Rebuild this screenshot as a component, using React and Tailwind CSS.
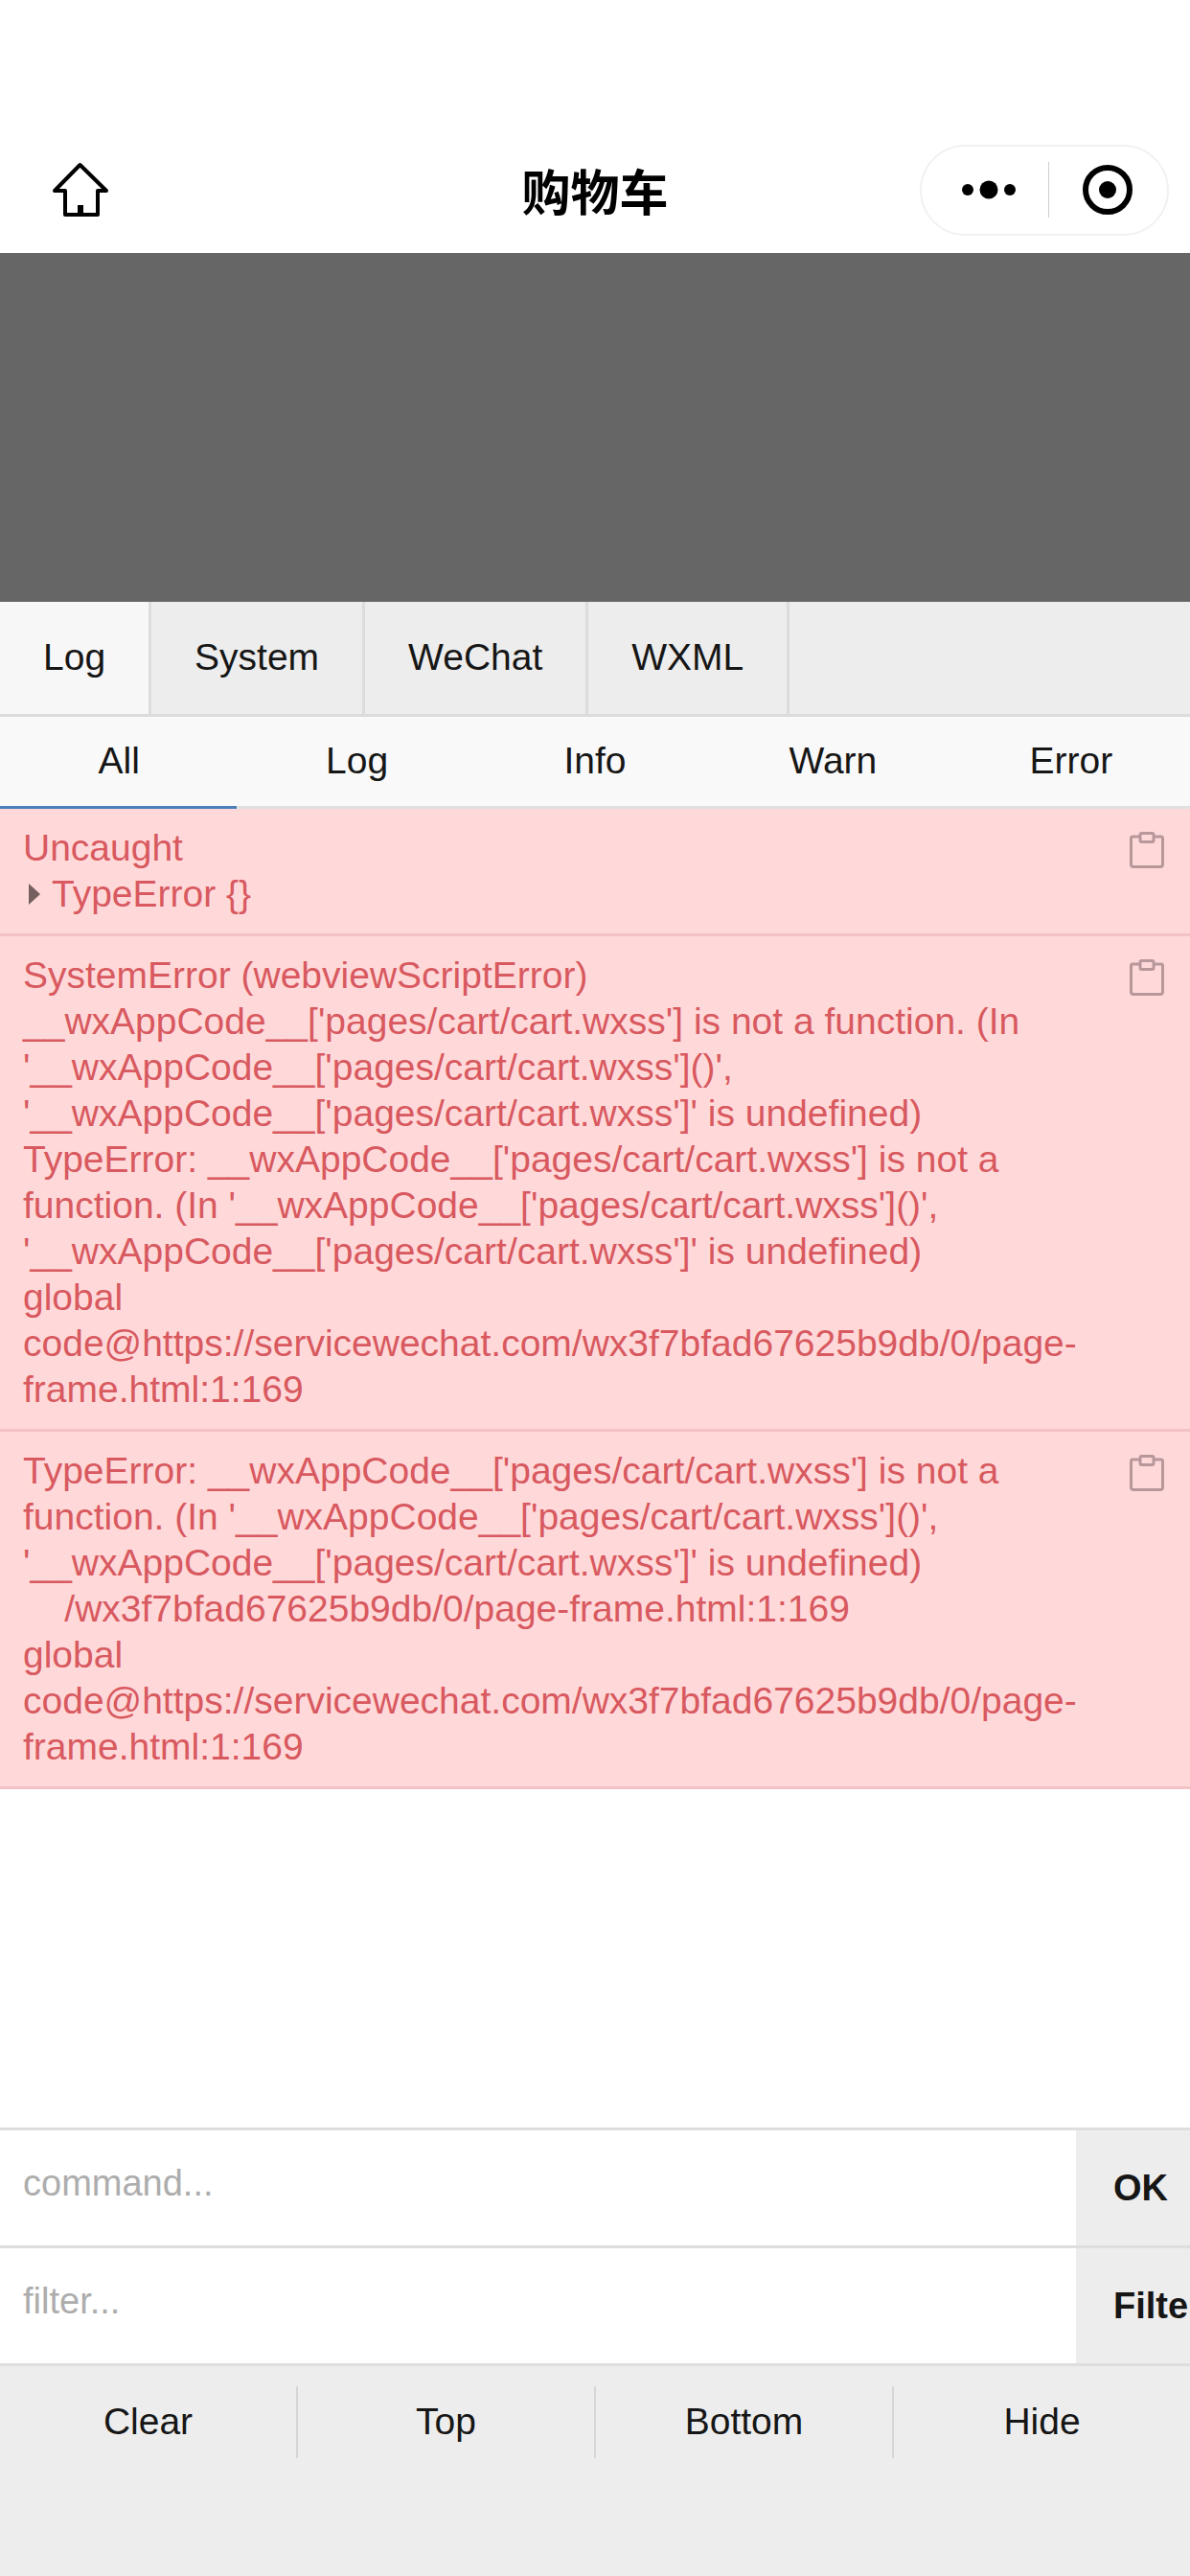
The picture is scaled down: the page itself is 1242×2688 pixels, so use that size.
const topTabs = [
  { label: 'Log', active: true },
  { label: 'System' },
  { label: 'WeChat' },
  { label: 'WXML' },
];

const subTabs = ['All', 'Log', 'Info', 'Warn', 'Error'];

const logs = [
  {
    id: 'uncaught',
    lines: ['Uncaught'],
    expandable: 'TypeError {}',
  },
  {
    id: 'system',
    lines: [
      'SystemError (webviewScriptError)',
      "__wxAppCode__['pages/cart/cart.wxss'] is not a function. (In",
      "'__wxAppCode__['pages/cart/cart.wxss']()',",
      "'__wxAppCode__['pages/cart/cart.wxss']' is undefined)",
      "TypeError: __wxAppCode__['pages/cart/cart.wxss'] is not a",
      "function. (In '__wxAppCode__['pages/cart/cart.wxss']()',",
      "'__wxAppCode__['pages/cart/cart.wxss']' is undefined)",
      'global',
      'code@https://servicewechat.com/wx3f7bfad67625b9db/0/page-',
      'frame.html:1:169',
    ],
  },
  {
    id: 'type',
    lines: [
      "TypeError: __wxAppCode__['pages/cart/cart.wxss'] is not a",
      "function. (In '__wxAppCode__['pages/cart/cart.wxss']()',",
      "'__wxAppCode__['pages/cart/cart.wxss']' is undefined)",
      '    /wx3f7bfad67625b9db/0/page-frame.html:1:169',
      'global',
      'code@https://servicewechat.com/wx3f7bfad67625b9db/0/page-',
      'frame.html:1:169',
    ],
  },
];

function HomeIcon() {
  return (
    <svg width="68" height="66" viewBox="0 0 68 66" fill="none" stroke="#000" strokeWidth="4" strokeLinejoin="round">
      <path d="M33.5 7 L7 34 H18 V59 H52 V34 H61 Z" />
      <rect x="31" y="49" width="6" height="10" fill="#000" stroke="none" />
    </svg>
  );
}

function Capsule() {
  return (
    <div className="flex h-[95px] w-[260px] items-center rounded-full border-2 border-[#f1f1f1]">
      <div className="flex flex-1 justify-center pl-[8px]">
        <svg width="70" height="20" viewBox="0 0 70 20" fill="#000">
          <circle cx="13" cy="10" r="6" />
          <circle cx="35" cy="10" r="9.5" />
          <circle cx="57" cy="10" r="6" />
        </svg>
      </div>
      <div className="h-[58px] w-[1px] bg-[#cfcfcf]" />
      <div className="flex flex-1 justify-center">
        <svg width="54" height="54" viewBox="0 0 54 54">
          <circle cx="27" cy="27" r="23" fill="none" stroke="#000" strokeWidth="6" />
          <circle cx="27" cy="27" r="9" fill="#000" />
        </svg>
      </div>
    </div>
  );
}

function CopyIcon() {
  return (
    <svg width="36" height="38" viewBox="0 0 36 38" fill="none" stroke="#b8979b" strokeWidth="3" strokeLinejoin="round" className="absolute right-[27px] top-[24px]">
      <path d="M11 5 H3 Q1.5 5 1.5 7 V34 Q1.5 36.5 4 36.5 H32 Q34.5 36.5 34.5 34 V7 Q34.5 5 33 5 H25" />
      <rect x="11" y="1.5" width="14" height="9" rx="1.5" />
    </svg>
  );
}

function LogEntry({ log }) {
  return (
    <div className="relative border-b-[3px] border-[#f3c2c6] bg-[#ffd9da] px-[24px] py-[17px] text-[39px] leading-[48px] text-[#d8595f]">
      {log.lines.map((line, i) => (
        <div key={i} className="whitespace-pre">{line}</div>
      ))}
      {log.expandable && (
        <div className="flex items-center">
          <svg width="30" height="24" viewBox="0 0 30 24" className="shrink-0">
            <path d="M6 1 L18 12 L6 23 Z" fill="#75605f" />
          </svg>
          <span>{log.expandable}</span>
        </div>
      )}
      <CopyIcon />
    </div>
  );
}

function InputRow({ placeholder, button }) {
  return (
    <div className="flex h-[123px] border-b-[3px] border-[#dedede]">
      <div className="flex flex-1 items-center bg-white px-[24px] pb-[10px] text-[38px] text-[#adadad]">{placeholder}</div>
      <div className="flex w-[119px] items-center overflow-hidden whitespace-nowrap bg-[#ededed] pl-[39px] text-[38px] font-bold text-[#161616]">{button}</div>
    </div>
  );
}

export default function App() {
  return (
    <div className="flex h-[2688px] flex-col overflow-hidden bg-white font-['Liberation_Sans','Noto_Sans_CJK_SC',sans-serif] text-[#161616]">
      <header className="grid h-[264px] grid-cols-[1fr_auto_1fr] items-center pb-[18px] pt-[150px]">
        <div className="pl-[50px]">
          <HomeIcon />
        </div>
        <h1 className="font-['Noto_Sans_CJK_SC',sans-serif] text-[51px] font-bold leading-none text-black">购物车</h1>
        <div className="flex justify-end pr-[22px]">
          <Capsule />
        </div>
      </header>

      <div className="h-[364px] bg-[#666666]" />

      <nav className="flex h-[120px] border-b-[3px] border-[#dcdcdc] bg-[#ededed] text-[39px]">
        {topTabs.map((tab) => (
          <div
            key={tab.label}
            className={
              tab.active
                ? 'flex items-center border-r-[3px] border-[#dcdcdc] bg-[#f7f7f7] px-[45px]'
                : 'flex items-center border-r-[3px] border-[#dcdcdc] px-[45px]'
            }
          >
            {tab.label}
          </div>
        ))}
      </nav>

      <div className="flex h-[93px] bg-[#f9f9f9] text-[39px]">
        {subTabs.map((tab) => (
          <div key={tab} className="flex flex-1 items-center justify-center">{tab}</div>
        ))}
      </div>
      <div className="flex h-[3px] bg-[#e0e0e0]">
        <div className="w-[247px] bg-[#4a7fb8]" />
      </div>

      <main className="flex-1">
        {logs.map((log) => (
          <LogEntry key={log.id} log={log} />
        ))}
      </main>

      <div className="border-t-[3px] border-[#dedede]">
        <InputRow placeholder="command..." button="OK" />
        <InputRow placeholder="filter..." button="Filter" />
      </div>

      <footer className="flex h-[219px] items-start bg-[#ededed] pt-[21px] text-[39px]">
        {['Clear', 'Top', 'Bottom', 'Hide'].map((label, i) => (
          <div
            key={label}
            className={
              i < 3
                ? 'flex h-[75px] flex-1 items-center justify-center border-r-2 border-[#d6d6d6]'
                : 'flex h-[75px] flex-1 items-center justify-center'
            }
          >
            {label}
          </div>
        ))}
      </footer>
    </div>
  );
}
